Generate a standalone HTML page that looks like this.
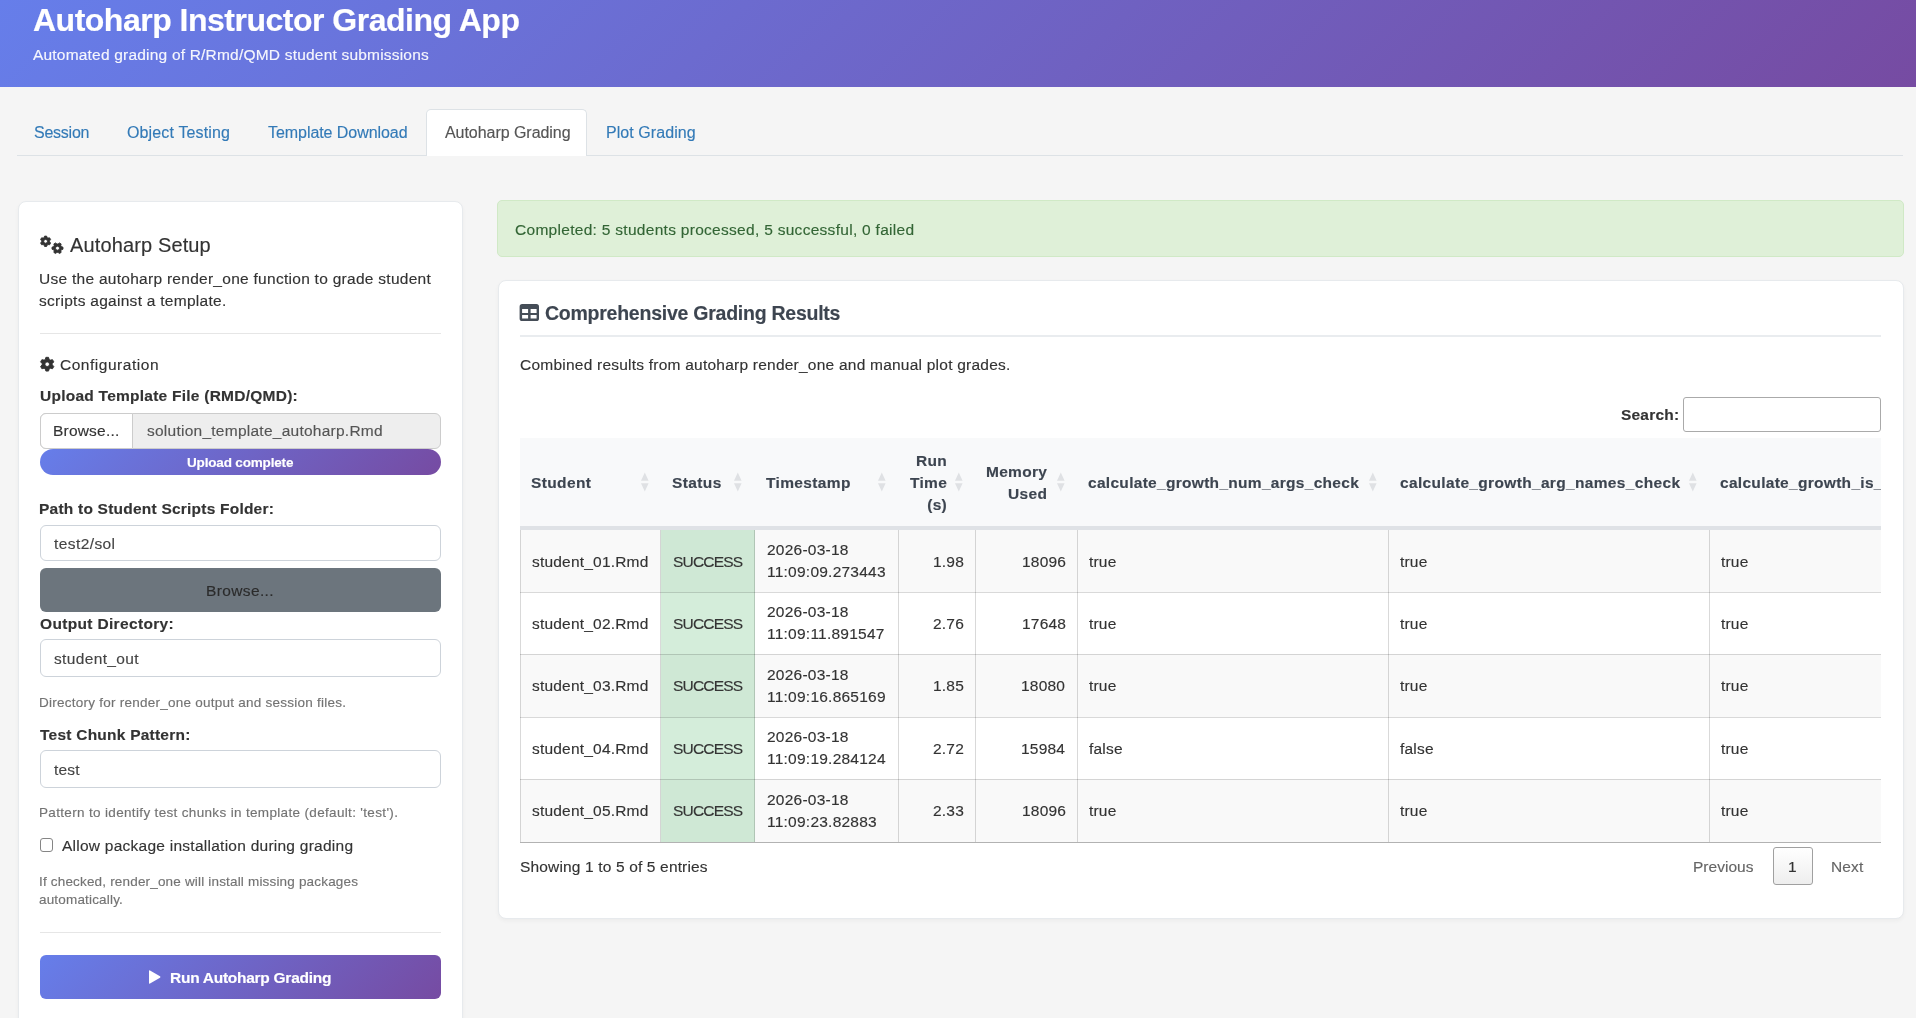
<!DOCTYPE html>
<html><head><meta charset="utf-8"><title>Autoharp Instructor Grading App</title>
<style>
html,body{margin:0;padding:0;}
body{width:1916px;height:1018px;overflow:hidden;background:#f5f5f5;position:relative;font-family:'Liberation Sans', sans-serif;}
.t{position:absolute;white-space:nowrap;will-change:transform;-webkit-text-stroke:0.15px currentColor;}
.b{position:absolute;}
</style></head><body>
<div class="b" style="left:0px;top:0px;width:1916.00px;height:87.00px;background:linear-gradient(135deg,#667eea 0%,#764ba2 100%);"></div>
<div class="t" style="left:33.40px;top:0.31px;font-size:32px;line-height:40.0px;font-weight:700;color:#fff;letter-spacing:-0.498px;">Autoharp Instructor Grading App</div>
<div class="t" style="left:33.00px;top:44.54px;font-size:15.5px;line-height:19.38px;font-weight:400;color:rgba(255,255,255,0.93);letter-spacing:0.200px;">Automated grading of R/Rmd/QMD student submissions</div>
<div class="b" style="left:17px;top:155px;width:1886.00px;height:1.00px;background:#dde2e6;"></div>
<div class="b" style="left:426px;top:109px;width:161.00px;height:47.00px;background:#fff;border:1px solid #dde2e6;border-bottom:none;border-radius:5px 5px 0 0;box-sizing:border-box;"></div>
<div class="t" style="left:34.30px;top:123.46px;font-size:16px;line-height:20.0px;font-weight:400;color:#337ab7;letter-spacing:-0.237px;">Session</div>
<div class="t" style="left:127.00px;top:123.46px;font-size:16px;line-height:20.0px;font-weight:400;color:#337ab7;letter-spacing:0.140px;">Object Testing</div>
<div class="t" style="left:267.60px;top:123.46px;font-size:16px;line-height:20.0px;font-weight:400;color:#337ab7;letter-spacing:-0.058px;">Template Download</div>
<div class="t" style="left:444.80px;top:123.46px;font-size:16px;line-height:20.0px;font-weight:400;color:#555;letter-spacing:-0.047px;">Autoharp Grading</div>
<div class="t" style="left:606.00px;top:123.46px;font-size:16px;line-height:20.0px;font-weight:400;color:#337ab7;letter-spacing:0.069px;">Plot Grading</div>
<div class="b" style="left:18px;top:201px;width:445.00px;height:839.00px;background:#fff;border:1px solid #e7eaed;box-sizing:border-box;border-radius:8px;box-shadow:0 2px 4px rgba(0,0,0,0.04);"></div>
<svg class="b" style="left:36px;top:230px" width="34" height="30" viewBox="36 230 34 30"><path d="M44.00,237.63 L44.60,236.10 L46.60,236.10 L47.20,237.63 L47.97,238.08 L49.61,237.83 L50.61,239.56 L49.57,240.85 L49.57,241.75 L50.61,243.04 L49.61,244.77 L47.97,244.52 L47.20,244.97 L46.60,246.50 L44.60,246.50 L44.00,244.97 L43.23,244.52 L41.59,244.77 L40.59,243.04 L41.63,241.75 L41.63,240.85 L40.59,239.56 L41.59,237.83 L43.23,238.08 Z M47.50,241.30 A1.9,1.9 0 1,0 43.70,241.30 A1.9,1.9 0 1,0 47.50,241.30 Z" fill="#333" fill-rule="evenodd" stroke="#333" stroke-width="0.9" stroke-linejoin="round"/><path d="M58.06,244.04 L59.39,242.93 L61.12,243.93 L60.83,245.64 L61.38,246.60 L63.01,247.20 L63.01,249.20 L61.38,249.80 L60.83,250.76 L61.12,252.47 L59.39,253.47 L58.06,252.36 L56.94,252.36 L55.61,253.47 L53.88,252.47 L54.17,250.76 L53.62,249.80 L51.99,249.20 L51.99,247.20 L53.62,246.60 L54.17,245.64 L53.88,243.93 L55.61,242.93 L56.94,244.04 Z M59.50,248.20 A2.0,2.0 0 1,0 55.50,248.20 A2.0,2.0 0 1,0 59.50,248.20 Z" fill="#333" fill-rule="evenodd" stroke="#333" stroke-width="0.9" stroke-linejoin="round"/></svg>
<div class="t" style="left:70.00px;top:232.77px;font-size:20px;line-height:25.0px;font-weight:400;color:#333;letter-spacing:0.133px;">Autoharp Setup</div>
<div class="t" style="left:39.00px;top:267.68px;font-size:15.5px;line-height:21.7px;font-weight:400;color:#333;letter-spacing:0.276px;">Use the autoharp render_one function to grade student<br>scripts against a template.</div>
<div class="b" style="left:40px;top:333px;width:401.00px;height:1.00px;background:#e6e6e6;"></div>
<svg class="b" style="left:36px;top:352px" width="24" height="24" viewBox="36 352 24 24"><path d="M45.20,359.51 L45.90,357.32 L48.50,357.32 L49.20,359.51 L50.26,360.12 L52.51,359.64 L53.81,361.89 L52.26,363.59 L52.26,364.81 L53.81,366.51 L52.51,368.76 L50.26,368.28 L49.20,368.89 L48.50,371.08 L45.90,371.08 L45.20,368.89 L44.14,368.28 L41.89,368.76 L40.59,366.51 L42.14,364.81 L42.14,363.59 L40.59,361.89 L41.89,359.64 L44.14,360.12 Z M49.50,364.20 A2.3,2.3 0 1,0 44.90,364.20 A2.3,2.3 0 1,0 49.50,364.20 Z" fill="#333" fill-rule="evenodd" stroke="#333" stroke-width="0.9" stroke-linejoin="round"/></svg>
<div class="t" style="left:59.60px;top:355.24px;font-size:15.5px;line-height:19.38px;font-weight:400;color:#333;letter-spacing:0.527px;">Configuration</div>
<div class="t" style="left:40.00px;top:385.94px;font-size:15.5px;line-height:19.38px;font-weight:700;color:#333;letter-spacing:0.249px;">Upload Template File (RMD/QMD):</div>
<div class="b" style="left:40px;top:412.5px;width:401.00px;height:36.00px;background:#eee;border:1px solid #ccc;border-radius:6px;box-sizing:border-box;"></div>
<div class="b" style="left:40px;top:412.5px;width:93.00px;height:36.00px;background:#fff;border:1px solid #ccc;border-radius:6px 0 0 6px;box-sizing:border-box;"></div>
<div class="t" style="left:53.30px;top:420.74px;font-size:15.5px;line-height:19.38px;font-weight:400;color:#333;letter-spacing:0.200px;">Browse...</div>
<div class="t" style="left:147.00px;top:420.74px;font-size:15.5px;line-height:19.38px;font-weight:400;color:#555;letter-spacing:0.251px;">solution_template_autoharp.Rmd</div>
<div class="b" style="left:40px;top:449.3px;width:401.00px;height:25.50px;background:linear-gradient(135deg,#667eea 0%,#764ba2 100%);border-radius:13px;"></div>
<div class="t" style="left:186.60px;top:454.68px;font-size:13.5px;line-height:16.88px;font-weight:700;color:#fff;letter-spacing:-0.168px;">Upload complete</div>
<div class="t" style="left:39.00px;top:498.64px;font-size:15.5px;line-height:19.38px;font-weight:700;color:#333;letter-spacing:0.222px;">Path to Student Scripts Folder:</div>
<div class="b" style="left:40px;top:525.4px;width:401.00px;height:36.10px;background:#fff;border:1px solid #cdd3da;border-radius:6px;box-sizing:border-box;"></div>
<div class="t" style="left:53.90px;top:534.14px;font-size:15.5px;line-height:19.38px;font-weight:400;color:#444;letter-spacing:0.415px;">test2/sol</div>
<div class="b" style="left:40px;top:568.2px;width:401.00px;height:43.70px;background:#6c757d;border-radius:6px;"></div>
<div class="t" style="left:206.20px;top:580.84px;font-size:15.5px;line-height:19.38px;font-weight:400;color:#2b2b2b;letter-spacing:0.375px;">Browse...</div>
<div class="t" style="left:40.00px;top:613.94px;font-size:15.5px;line-height:19.38px;font-weight:700;color:#333;letter-spacing:0.335px;">Output Directory:</div>
<div class="b" style="left:40px;top:639.2px;width:401.00px;height:37.50px;background:#fff;border:1px solid #cdd3da;border-radius:6px;box-sizing:border-box;"></div>
<div class="t" style="left:53.90px;top:648.94px;font-size:15.5px;line-height:19.38px;font-weight:400;color:#444;letter-spacing:0.349px;">student_out</div>
<div class="t" style="left:39.00px;top:694.98px;font-size:13.5px;line-height:16.88px;font-weight:400;color:#737373;letter-spacing:0.248px;">Directory for render_one output and session files.</div>
<div class="t" style="left:40.00px;top:725.04px;font-size:15.5px;line-height:19.38px;font-weight:700;color:#333;letter-spacing:0.236px;">Test Chunk Pattern:</div>
<div class="b" style="left:40px;top:750.2px;width:401.00px;height:37.50px;background:#fff;border:1px solid #cdd3da;border-radius:6px;box-sizing:border-box;"></div>
<div class="t" style="left:53.90px;top:759.74px;font-size:15.5px;line-height:19.38px;font-weight:400;color:#444;letter-spacing:0.200px;">test</div>
<div class="t" style="left:39.00px;top:805.48px;font-size:13.5px;line-height:16.88px;font-weight:400;color:#737373;letter-spacing:0.337px;">Pattern to identify test chunks in template (default: 'test').</div>
<div class="b" style="left:40px;top:838.3px;width:13.00px;height:13.70px;background:#fff;border:1px solid #858585;border-radius:3px;box-sizing:border-box;"></div>
<div class="t" style="left:62.00px;top:835.84px;font-size:15.5px;line-height:19.38px;font-weight:400;color:#333;letter-spacing:0.253px;">Allow package installation during grading</div>
<div class="t" style="left:39.00px;top:873.12px;font-size:13.5px;line-height:18.0px;font-weight:400;color:#737373;letter-spacing:0.177px;">If checked, render_one will install missing packages<br>automatically.</div>
<div class="b" style="left:40px;top:932px;width:401.00px;height:1.00px;background:#e6e6e6;"></div>
<div class="b" style="left:40px;top:955.1px;width:401.00px;height:43.70px;background:linear-gradient(135deg,#667eea 0%,#764ba2 100%);border-radius:6px;"></div>
<svg class="b" style="left:140px;top:964px" width="26" height="26" viewBox="140 964 26 26"><path d="M150.0,970.4 L160.0,976.2 Q161.0,977 160.0,977.8 L150.0,983.6 Q149.0,984.2 149.0,983.0 L149.0,971.0 Q149.0,969.8 150.0,970.4 Z" fill="#fff"/></svg>
<div class="t" style="left:169.50px;top:968.14px;font-size:15.5px;line-height:19.38px;font-weight:700;color:#fff;letter-spacing:-0.267px;">Run Autoharp Grading</div>
<div class="b" style="left:497px;top:200px;width:1407.00px;height:56.70px;background:#dff0d8;border:1px solid #d0e9c6;border-radius:5px;box-sizing:border-box;"></div>
<div class="t" style="left:514.50px;top:220.14px;font-size:15.5px;line-height:19.38px;font-weight:400;color:#336535;letter-spacing:0.291px;">Completed: 5 students processed, 5 successful, 0 failed</div>
<div class="b" style="left:497.5px;top:279.5px;width:1406.00px;height:639.50px;background:#fff;border:1px solid #e7eaed;box-sizing:border-box;border-radius:8px;box-shadow:0 2px 4px rgba(0,0,0,0.04);"></div>
<svg class="b" style="left:514px;top:298px" width="32" height="28" viewBox="514 298 32 28"><path d="M522.2,304.1 H536.4 Q539.0,304.1 539.0,306.70000000000005 V318.4 Q539.0,321.0 536.4,321.0 H522.2 Q519.6,321.0 519.6,318.4 V306.70000000000005 Q519.6,304.1 522.2,304.1 ZM522.1,309.0 H528.1 V313.0 H522.1 ZM530.6,309.0 H536.6 V313.0 H530.6 ZM522.1,315.0 H528.1 V318.5 H522.1 ZM530.6,315.0 H536.6 V318.5 H530.6 Z" fill="#454d57" fill-rule="evenodd"/></svg>
<div class="t" style="left:544.60px;top:301.05px;font-size:19.5px;line-height:24.38px;font-weight:700;color:#3d4550;letter-spacing:-0.246px;">Comprehensive Grading Results</div>
<div class="b" style="left:520px;top:335px;width:1361.00px;height:2.00px;background:#e9ecef;"></div>
<div class="t" style="left:520.00px;top:354.94px;font-size:15.5px;line-height:19.38px;font-weight:400;color:#333;letter-spacing:0.229px;">Combined results from autoharp render_one and manual plot grades.</div>
<div class="t" style="left:1620.60px;top:404.94px;font-size:15.5px;line-height:19.38px;font-weight:700;color:#333;letter-spacing:0.200px;">Search:</div>
<div class="b" style="left:1682.5px;top:397.2px;width:198.50px;height:34.40px;background:#fff;border:1px solid #aaa;border-radius:3px;box-sizing:border-box;"></div>
<div class="b" style="left:520px;top:438px;width:1361px;height:580px;overflow:hidden;">
<div class="b" style="left:0.00px;top:0.00px;width:1361.00px;height:88.00px;background:#f8f9fa;"></div>
<div class="b" style="left:0.00px;top:88.00px;width:1361.00px;height:4.00px;background:#dfe2e6;"></div>
<div class="t" style="left:11.00px;top:35.14px;font-size:15.5px;line-height:19.38px;font-weight:700;color:#3d4550;letter-spacing:0.379px;">Student</div>
<svg class="b" style="left:119.80px;top:33.70px" width="10" height="20" viewBox="639.8000000000001 471.7 10 20"><path d="M640.8000000000001,480.5 L644.6,472.09999999999997 L648.4,480.5 Z M640.8000000000001,482.9 L644.6,491.09999999999997 L648.4,482.9 Z" fill="#dfe1e4"/></svg>
<div class="t" style="left:152.00px;top:35.14px;font-size:15.5px;line-height:19.38px;font-weight:700;color:#3d4550;letter-spacing:0.390px;">Status</div>
<svg class="b" style="left:212.70px;top:33.70px" width="10" height="20" viewBox="732.7 471.7 10 20"><path d="M733.7,480.5 L737.5,472.09999999999997 L741.3,480.5 Z M733.7,482.9 L737.5,491.09999999999997 L741.3,482.9 Z" fill="#dfe1e4"/></svg>
<div class="t" style="left:246.30px;top:34.94px;font-size:15.5px;line-height:19.38px;font-weight:700;color:#3d4550;letter-spacing:0.365px;">Timestamp</div>
<svg class="b" style="left:357.40px;top:33.70px" width="10" height="20" viewBox="877.4000000000001 471.7 10 20"><path d="M878.4000000000001,480.5 L882.2,472.09999999999997 L886.0,480.5 Z M878.4000000000001,482.9 L882.2,491.09999999999997 L886.0,482.9 Z" fill="#dfe1e4"/></svg>
<div class="t" style="left:387.68px;width:39.09px;text-align:right;top:11.68px;font-size:15.5px;line-height:21.9px;font-weight:700;color:#3d4550;letter-spacing:0.298px;">Run<br>Time<br>(s)</div>
<svg class="b" style="left:434.20px;top:33.70px" width="10" height="20" viewBox="954.2 471.7 10 20"><path d="M955.2,480.5 L959,472.09999999999997 L962.8,480.5 Z M955.2,482.9 L959,491.09999999999997 L962.8,482.9 Z" fill="#dfe1e4"/></svg>
<div class="t" style="left:464.30px;width:63.22px;text-align:right;top:22.78px;font-size:15.5px;line-height:21.5px;font-weight:700;color:#3d4550;letter-spacing:0.298px;">Memory<br>Used</div>
<svg class="b" style="left:536.20px;top:33.70px" width="10" height="20" viewBox="1056.2 471.7 10 20"><path d="M1057.2,480.5 L1061,472.09999999999997 L1064.8,480.5 Z M1057.2,482.9 L1061,491.09999999999997 L1064.8,482.9 Z" fill="#dfe1e4"/></svg>
<div class="t" style="left:568.20px;top:35.14px;font-size:15.5px;line-height:19.38px;font-weight:700;color:#3d4550;letter-spacing:0.298px;">calculate_growth_num_args_check</div>
<svg class="b" style="left:847.90px;top:33.70px" width="10" height="20" viewBox="1367.9 471.7 10 20"><path d="M1368.9,480.5 L1372.7,472.09999999999997 L1376.5,480.5 Z M1368.9,482.9 L1372.7,491.09999999999997 L1376.5,482.9 Z" fill="#dfe1e4"/></svg>
<div class="t" style="left:879.60px;top:35.14px;font-size:15.5px;line-height:19.38px;font-weight:700;color:#3d4550;letter-spacing:0.334px;">calculate_growth_arg_names_check</div>
<svg class="b" style="left:1168.40px;top:33.70px" width="10" height="20" viewBox="1688.4 471.7 10 20"><path d="M1689.4,480.5 L1693.2,472.09999999999997 L1697.0,480.5 Z M1689.4,482.9 L1693.2,491.09999999999997 L1697.0,482.9 Z" fill="#dfe1e4"/></svg>
<div class="t" style="left:1200.40px;top:35.14px;font-size:15.5px;line-height:19.38px;font-weight:700;color:#3d4550;letter-spacing:0.298px;">calculate_growth_is_numeric_check</div>
<div class="b" style="left:0.00px;top:92.00px;width:1361.00px;height:62.00px;background:#f9f9f9;"></div>
<div class="b" style="left:141.00px;top:92.00px;width:94.00px;height:62.00px;background:#cfe8d5;"></div>
<div class="t" style="left:11.50px;top:113.94px;font-size:15.5px;line-height:19.38px;font-weight:400;color:#333;letter-spacing:0.200px;">student_01.Rmd</div>
<div class="t" style="left:152.90px;top:113.94px;font-size:15.5px;line-height:19.38px;font-weight:400;color:#333;letter-spacing:-0.799px;">SUCCESS</div>
<div class="t" style="left:246.90px;top:101.18px;font-size:15.5px;line-height:22.3px;font-weight:400;color:#333;letter-spacing:0.240px;">2026-03-18<br>11:09:09.273443</div>
<div class="t" style="left:410.85px;width:32.97px;text-align:right;top:113.94px;font-size:15.5px;line-height:19.38px;font-weight:400;color:#333;letter-spacing:0.200px;">1.98</div>
<div class="t" style="left:499.72px;width:46.10px;text-align:right;top:113.94px;font-size:15.5px;line-height:19.38px;font-weight:400;color:#333;letter-spacing:0.200px;">18096</div>
<div class="t" style="left:569.40px;top:113.94px;font-size:15.5px;line-height:19.38px;font-weight:400;color:#333;letter-spacing:0.200px;">true</div>
<div class="t" style="left:880.40px;top:113.94px;font-size:15.5px;line-height:19.38px;font-weight:400;color:#333;letter-spacing:0.200px;">true</div>
<div class="t" style="left:1200.80px;top:113.94px;font-size:15.5px;line-height:19.38px;font-weight:400;color:#333;letter-spacing:0.200px;">true</div>
<div class="b" style="left:0.00px;top:154.00px;width:1361.00px;height:62.00px;background:#fff;"></div>
<div class="b" style="left:141.00px;top:154.00px;width:94.00px;height:62.00px;background:#d4edda;"></div>
<div class="b" style="left:0.00px;top:154.00px;width:1361.00px;height:1.00px;background:rgba(0,0,0,0.15);"></div>
<div class="t" style="left:11.50px;top:175.94px;font-size:15.5px;line-height:19.38px;font-weight:400;color:#333;letter-spacing:0.200px;">student_02.Rmd</div>
<div class="t" style="left:152.90px;top:175.94px;font-size:15.5px;line-height:19.38px;font-weight:400;color:#333;letter-spacing:-0.799px;">SUCCESS</div>
<div class="t" style="left:246.90px;top:163.18px;font-size:15.5px;line-height:22.3px;font-weight:400;color:#333;letter-spacing:0.240px;">2026-03-18<br>11:09:11.891547</div>
<div class="t" style="left:410.85px;width:32.97px;text-align:right;top:175.94px;font-size:15.5px;line-height:19.38px;font-weight:400;color:#333;letter-spacing:0.200px;">2.76</div>
<div class="t" style="left:499.72px;width:46.10px;text-align:right;top:175.94px;font-size:15.5px;line-height:19.38px;font-weight:400;color:#333;letter-spacing:0.200px;">17648</div>
<div class="t" style="left:569.40px;top:175.94px;font-size:15.5px;line-height:19.38px;font-weight:400;color:#333;letter-spacing:0.200px;">true</div>
<div class="t" style="left:880.40px;top:175.94px;font-size:15.5px;line-height:19.38px;font-weight:400;color:#333;letter-spacing:0.200px;">true</div>
<div class="t" style="left:1200.80px;top:175.94px;font-size:15.5px;line-height:19.38px;font-weight:400;color:#333;letter-spacing:0.200px;">true</div>
<div class="b" style="left:0.00px;top:216.00px;width:1361.00px;height:63.00px;background:#f9f9f9;"></div>
<div class="b" style="left:141.00px;top:216.00px;width:94.00px;height:63.00px;background:#cfe8d5;"></div>
<div class="b" style="left:0.00px;top:216.00px;width:1361.00px;height:1.00px;background:rgba(0,0,0,0.15);"></div>
<div class="t" style="left:11.50px;top:238.44px;font-size:15.5px;line-height:19.38px;font-weight:400;color:#333;letter-spacing:0.200px;">student_03.Rmd</div>
<div class="t" style="left:152.90px;top:238.44px;font-size:15.5px;line-height:19.38px;font-weight:400;color:#333;letter-spacing:-0.799px;">SUCCESS</div>
<div class="t" style="left:246.90px;top:225.68px;font-size:15.5px;line-height:22.3px;font-weight:400;color:#333;letter-spacing:0.240px;">2026-03-18<br>11:09:16.865169</div>
<div class="t" style="left:410.85px;width:32.97px;text-align:right;top:238.44px;font-size:15.5px;line-height:19.38px;font-weight:400;color:#333;letter-spacing:0.200px;">1.85</div>
<div class="t" style="left:498.72px;width:46.10px;text-align:right;top:238.44px;font-size:15.5px;line-height:19.38px;font-weight:400;color:#333;letter-spacing:0.200px;">18080</div>
<div class="t" style="left:569.40px;top:238.44px;font-size:15.5px;line-height:19.38px;font-weight:400;color:#333;letter-spacing:0.200px;">true</div>
<div class="t" style="left:880.40px;top:238.44px;font-size:15.5px;line-height:19.38px;font-weight:400;color:#333;letter-spacing:0.200px;">true</div>
<div class="t" style="left:1200.80px;top:238.44px;font-size:15.5px;line-height:19.38px;font-weight:400;color:#333;letter-spacing:0.200px;">true</div>
<div class="b" style="left:0.00px;top:279.00px;width:1361.00px;height:62.00px;background:#fff;"></div>
<div class="b" style="left:141.00px;top:279.00px;width:94.00px;height:62.00px;background:#d4edda;"></div>
<div class="b" style="left:0.00px;top:279.00px;width:1361.00px;height:1.00px;background:rgba(0,0,0,0.15);"></div>
<div class="t" style="left:11.50px;top:300.94px;font-size:15.5px;line-height:19.38px;font-weight:400;color:#333;letter-spacing:0.200px;">student_04.Rmd</div>
<div class="t" style="left:152.90px;top:300.94px;font-size:15.5px;line-height:19.38px;font-weight:400;color:#333;letter-spacing:-0.799px;">SUCCESS</div>
<div class="t" style="left:246.90px;top:288.18px;font-size:15.5px;line-height:22.3px;font-weight:400;color:#333;letter-spacing:0.240px;">2026-03-18<br>11:09:19.284124</div>
<div class="t" style="left:410.85px;width:32.97px;text-align:right;top:300.94px;font-size:15.5px;line-height:19.38px;font-weight:400;color:#333;letter-spacing:0.200px;">2.72</div>
<div class="t" style="left:498.72px;width:46.10px;text-align:right;top:300.94px;font-size:15.5px;line-height:19.38px;font-weight:400;color:#333;letter-spacing:0.200px;">15984</div>
<div class="t" style="left:569.40px;top:300.94px;font-size:15.5px;line-height:19.38px;font-weight:400;color:#333;letter-spacing:0.200px;">false</div>
<div class="t" style="left:880.40px;top:300.94px;font-size:15.5px;line-height:19.38px;font-weight:400;color:#333;letter-spacing:0.200px;">false</div>
<div class="t" style="left:1200.80px;top:300.94px;font-size:15.5px;line-height:19.38px;font-weight:400;color:#333;letter-spacing:0.200px;">true</div>
<div class="b" style="left:0.00px;top:341.00px;width:1361.00px;height:63.00px;background:#f9f9f9;"></div>
<div class="b" style="left:141.00px;top:341.00px;width:94.00px;height:63.00px;background:#cfe8d5;"></div>
<div class="b" style="left:0.00px;top:341.00px;width:1361.00px;height:1.00px;background:rgba(0,0,0,0.15);"></div>
<div class="t" style="left:11.50px;top:363.44px;font-size:15.5px;line-height:19.38px;font-weight:400;color:#333;letter-spacing:0.200px;">student_05.Rmd</div>
<div class="t" style="left:152.90px;top:363.44px;font-size:15.5px;line-height:19.38px;font-weight:400;color:#333;letter-spacing:-0.799px;">SUCCESS</div>
<div class="t" style="left:246.90px;top:350.68px;font-size:15.5px;line-height:22.3px;font-weight:400;color:#333;letter-spacing:0.240px;">2026-03-18<br>11:09:23.82883</div>
<div class="t" style="left:410.85px;width:32.97px;text-align:right;top:363.44px;font-size:15.5px;line-height:19.38px;font-weight:400;color:#333;letter-spacing:0.200px;">2.33</div>
<div class="t" style="left:499.72px;width:46.10px;text-align:right;top:363.44px;font-size:15.5px;line-height:19.38px;font-weight:400;color:#333;letter-spacing:0.200px;">18096</div>
<div class="t" style="left:569.40px;top:363.44px;font-size:15.5px;line-height:19.38px;font-weight:400;color:#333;letter-spacing:0.200px;">true</div>
<div class="t" style="left:880.40px;top:363.44px;font-size:15.5px;line-height:19.38px;font-weight:400;color:#333;letter-spacing:0.200px;">true</div>
<div class="t" style="left:1200.80px;top:363.44px;font-size:15.5px;line-height:19.38px;font-weight:400;color:#333;letter-spacing:0.200px;">true</div>
<div class="b" style="left:0.00px;top:92.00px;width:1.00px;height:312.00px;background:rgba(0,0,0,0.15);"></div>
<div class="b" style="left:140.00px;top:92.00px;width:1.00px;height:312.00px;background:rgba(0,0,0,0.15);"></div>
<div class="b" style="left:234.00px;top:92.00px;width:1.00px;height:312.00px;background:rgba(0,0,0,0.15);"></div>
<div class="b" style="left:378.00px;top:92.00px;width:1.00px;height:312.00px;background:rgba(0,0,0,0.15);"></div>
<div class="b" style="left:455.00px;top:92.00px;width:1.00px;height:312.00px;background:rgba(0,0,0,0.15);"></div>
<div class="b" style="left:557.00px;top:92.00px;width:1.00px;height:312.00px;background:rgba(0,0,0,0.15);"></div>
<div class="b" style="left:868.00px;top:92.00px;width:1.00px;height:312.00px;background:rgba(0,0,0,0.15);"></div>
<div class="b" style="left:1189.00px;top:92.00px;width:1.00px;height:312.00px;background:rgba(0,0,0,0.15);"></div>
<div class="b" style="left:0.00px;top:404.00px;width:1361.00px;height:1.00px;background:rgba(0,0,0,0.3);"></div>
</div>
<div class="t" style="left:520.00px;top:856.84px;font-size:15.5px;line-height:19.38px;font-weight:400;color:#333;letter-spacing:0.155px;">Showing 1 to 5 of 5 entries</div>
<div class="t" style="left:1693.00px;top:856.74px;font-size:15.5px;line-height:19.38px;font-weight:400;color:#666;letter-spacing:0.021px;">Previous</div>
<div class="b" style="left:1773.2px;top:847.4px;width:39.40px;height:38.10px;background:linear-gradient(to bottom,#fff 0%,#eee 100%);border:1px solid #a0a0a0;border-radius:3px;box-sizing:border-box;"></div>
<div class="t" style="left:1786.20px;width:10.82px;text-align:right;top:856.74px;font-size:15.5px;line-height:19.38px;font-weight:400;color:#333;letter-spacing:0.200px;">1</div>
<div class="t" style="left:1831.00px;top:856.74px;font-size:15.5px;line-height:19.38px;font-weight:400;color:#666;letter-spacing:0.112px;">Next</div>
</body></html>
